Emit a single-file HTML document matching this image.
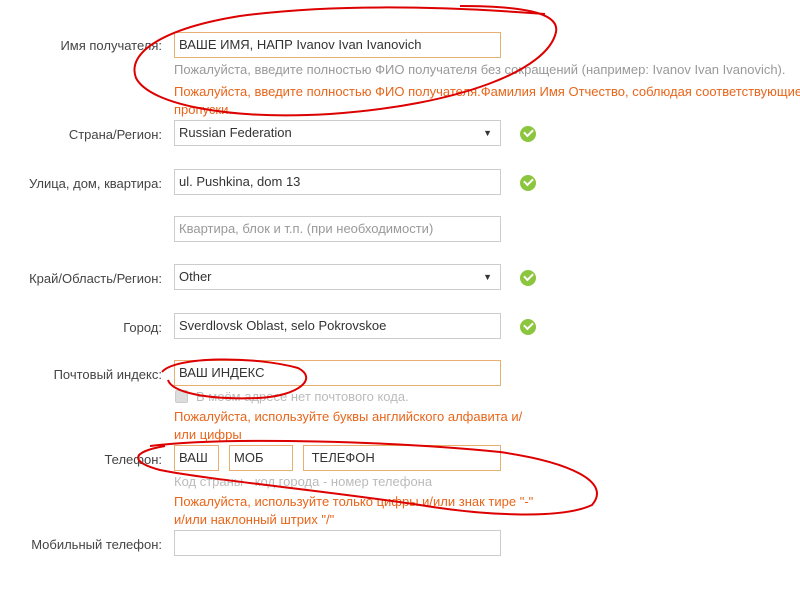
<!DOCTYPE html>
<html><head><meta charset="utf-8"><style>
body{margin:0;width:800px;height:589px;background:#fff;position:relative;overflow:hidden;font-family:"Liberation Sans","DejaVu Sans",sans-serif;font-size:13px;color:#333}
.a{position:absolute;white-space:nowrap}
.l{position:absolute;right:638px;text-align:right;color:#444}
.i{position:absolute;height:24px;border:1px solid #ccc;box-sizing:content-box;line-height:24px;padding-left:4px;color:#333;background:#fff}
.o{border-color:#e8b070}
.h{color:#999}
.e{color:#e8651a}
.ok{position:absolute;width:16px;height:16px;border-radius:50%;background:#8cc63f;left:520px}
.ok:after{content:"";position:absolute;left:4px;top:3px;width:7px;height:4px;border-left:2px solid #fff;border-bottom:2px solid #fff;transform:rotate(-45deg)}
.ar{position:absolute;right:8px;top:0;font-size:9px;color:#333}
</style></head><body>
<div class="l" style="top:38px">Имя получателя:</div>
<div class="i o" style="left:174px;top:32px;width:321px">ВАШЕ ИМЯ, НАПР Ivanov Ivan Ivanovich</div>
<div class="a h" style="left:174px;top:62px">Пожалуйста, введите полностью ФИО получателя без сокращений (например: Ivanov Ivan Ivanovich).</div>
<div class="a e" style="left:174px;top:84px">Пожалуйста, введите полностью ФИО получателя.Фамилия Имя Отчество, соблюдая соответствующие</div>
<div class="a e" style="left:174px;top:102px">пропуски.</div>

<div class="l" style="top:127px">Страна/Регион:</div>
<div class="i" style="left:174px;top:120px;width:321px">Russian Federation<span class="ar">▼</span></div>
<div class="ok" style="top:126px"></div>

<div class="l" style="top:176px">Улица, дом, квартира:</div>
<div class="i" style="left:174px;top:169px;width:321px">ul. Pushkina, dom 13</div>
<div class="ok" style="top:175px"></div>
<div class="i h" style="left:174px;top:216px;width:321px">Квартира, блок и т.п. (при необходимости)</div>

<div class="l" style="top:271px">Край/Область/Регион:</div>
<div class="i" style="left:174px;top:264px;width:321px">Other<span class="ar">▼</span></div>
<div class="ok" style="top:270px"></div>

<div class="l" style="top:320px">Город:</div>
<div class="i" style="left:174px;top:313px;width:321px">Sverdlovsk Oblast, selo Pokrovskoe</div>
<div class="ok" style="top:319px"></div>

<div class="l" style="top:367px">Почтовый индекс:</div>
<div class="i o" style="left:174px;top:360px;width:321px">ВАШ ИНДЕКС</div>
<div class="a" style="left:175px;top:390px;width:11px;height:11px;background:#ddd;border:1px solid #ccc;border-radius:2px"></div>
<div class="a" style="left:196px;top:389px;color:#bbb">В моём адресе нет почтового кода.</div>
<div class="a e" style="left:174px;top:409px">Пожалуйста, используйте буквы английского алфавита и/</div>
<div class="a e" style="left:174px;top:427px">или цифры</div>

<div class="l" style="top:452px">Телефон:</div>
<div class="i o" style="left:174px;top:445px;width:39px">ВАШ</div>
<div class="i o" style="left:229px;top:445px;width:58px">МОБ</div>
<div class="i o" style="left:303px;top:445px;width:192px">&nbsp;ТЕЛЕФОН</div>
<div class="a" style="left:174px;top:474px;color:#bbb">Код страны - код города - номер телефона</div>
<div class="a e" style="left:174px;top:494px">Пожалуйста, используйте только цифры и/или знак тире "-"</div>
<div class="a e" style="left:174px;top:512px">и/или наклонный штрих "/"</div>

<div class="l" style="top:537px">Мобильный телефон:</div>
<div class="i" style="left:174px;top:530px;width:321px"></div>

<svg width="800" height="589" style="position:absolute;left:0;top:0" fill="none" stroke="#d00" stroke-width="2">
<path d="M460 6 C520 6 560 12 556 32 C548 70 460 105 330 114 C230 120 150 105 136 78 C126 52 165 28 240 16 C330 4 440 6 545 14"/>
<path d="M162 372 C175 356 255 356 298 368 C318 378 300 396 258 398 C205 400 172 392 168 380"/>
<path d="M150 446 C230 436 400 442 500 452 C570 462 612 482 592 505 C560 520 480 515 420 505 C320 490 210 480 160 470 C130 462 130 452 165 446"/>
</svg>
</body></html>
